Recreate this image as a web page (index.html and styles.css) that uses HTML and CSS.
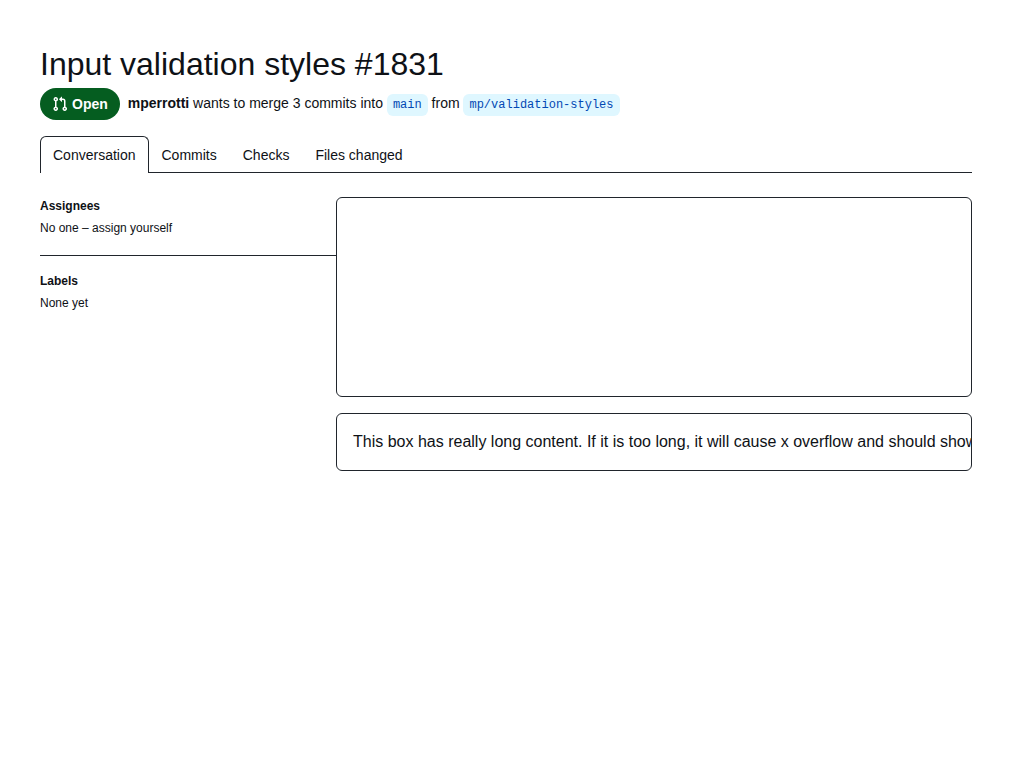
FILE: index.html
```html
<!DOCTYPE html>
<html lang="en">
<head>
<meta charset="utf-8">
<meta name="viewport" content="width=device-width, initial-scale=1">
<title>Input validation styles #1831</title>
<link rel="stylesheet" href="styles.css">
</head>
<body>
<div class="page">
  <header class="page-header">
    <h1 class="title">Input validation styles #1831</h1>
    <div class="meta">
      <span class="state">
        <svg class="state-icon" viewBox="0 0 16 16" width="16" height="16" fill="currentColor" aria-hidden="true"><path d="M1.5 3.25a2.25 2.25 0 1 1 3 2.122v5.256a2.251 2.251 0 1 1-1.5 0V5.372A2.25 2.25 0 0 1 1.5 3.25Zm5.677-.177L9.573.677A.25.25 0 0 1 10 .854V2.5h1A2.5 2.5 0 0 1 13.5 5v5.628a2.251 2.251 0 1 1-1.5 0V5a1 1 0 0 0-1-1h-1v1.646a.25.25 0 0 1-.427.177L7.177 3.427a.25.25 0 0 1 0-.354ZM3.75 2.5a.75.75 0 1 0 0 1.5.75.75 0 0 0 0-1.5Zm0 9.5a.75.75 0 1 0 0 1.5.75.75 0 0 0 0-1.5Zm8.25.75a.75.75 0 1 0 1.5 0 .75.75 0 0 0-1.5 0Z"/></svg>
        Open
      </span>
      <p class="summary"><a class="author" href="#author">mperrotti</a> wants to merge 3 commits into <a class="branch" href="#main">main</a> from <a class="branch" href="#validation-styles">mp/validation-styles</a></p>
    </div>
    <nav class="tabs" aria-label="Pull request">
      <a class="tab tab-selected" href="#conversation" aria-current="page">Conversation</a>
      <a class="tab" href="#commits">Commits</a>
      <a class="tab" href="#checks">Checks</a>
      <a class="tab" href="#files">Files changed</a>
    </nav>
  </header>
  <div class="columns">
    <aside class="sidebar">
      <section>
        <h2 class="side-heading">Assignees</h2>
        <p class="side-text">No one – assign yourself</p>
      </section>
      <section class="side-section">
        <h2 class="side-heading">Labels</h2>
        <p class="side-text">None yet</p>
      </section>
    </aside>
    <main class="content">
      <div class="box box-empty"></div>
      <div class="box box-long">This box has really long content. If it is too long, it will cause x overflow and should show a scrollbar.</div>
    </main>
  </div>
</div>
</body>
</html>
```

FILE: styles.css
```css
* {
  box-sizing: border-box;
}

body {
  margin: 0;
  background: #ffffff;
  color: #0e1116;
  font-family: "Liberation Sans", Arial, sans-serif;
  font-size: 16px;
  line-height: 24px;
}

h1, h2, p {
  margin: 0;
}

a {
  color: inherit;
  text-decoration: none;
}

.page {
  max-width: 1280px;
  margin: 0 auto;
  padding: 40px;
}

.title {
  font-size: 32px;
  font-weight: 400;
  line-height: 48px;
}

.meta {
  display: flex;
  align-items: center;
  gap: 8px;
}

.state {
  display: inline-flex;
  align-items: center;
  gap: 4px;
  padding: 8px 12px;
  border-radius: 16px;
  background: #055d20;
  color: #ffffff;
  font-size: 14px;
  font-weight: 700;
  line-height: 16px;
}

.state-icon {
  flex: none;
}

.summary {
  font-size: 14px;
  line-height: 20px;
}

.author {
  font-weight: 700;
}

.branch {
  display: inline-block;
  padding: 2px 6px;
  border-radius: 6px;
  background: #dff7ff;
  color: #0349b4;
  font-family: "Liberation Mono", monospace;
  font-size: 12px;
  line-height: 18px;
}

.tabs {
  display: flex;
  margin-top: 16px;
  border-bottom: 1px solid #20252c;
}

.tab {
  padding: 8px 12px;
  border: 1px solid transparent;
  border-bottom: 0;
  font-size: 14px;
  line-height: 20px;
  margin-bottom: -1px;
}

.tab-selected {
  border-color: #20252c;
  border-radius: 6px 6px 0 0;
  background: #ffffff;
}

.columns {
  display: grid;
  grid-template-columns: 296px minmax(0, 1fr);
  margin-top: 24px;
}

.side-section {
  margin-top: 16px;
  padding-top: 16px;
  border-top: 1px solid #20252c;
}

.side-heading {
  font-size: 12px;
  font-weight: 700;
  line-height: 18px;
}

.side-text {
  margin-top: 2px;
  font-size: 12px;
  line-height: 22px;
}

.content {
  display: grid;
  grid-template-columns: minmax(0, 1fr);
  gap: 16px;
}

.box {
  border: 1px solid #20252c;
  border-radius: 6px;
}

.box-empty {
  min-height: 200px;
}

.box-long {
  padding: 16px;
  overflow-x: auto;
  scrollbar-width: none;
  white-space: nowrap;
}
```
